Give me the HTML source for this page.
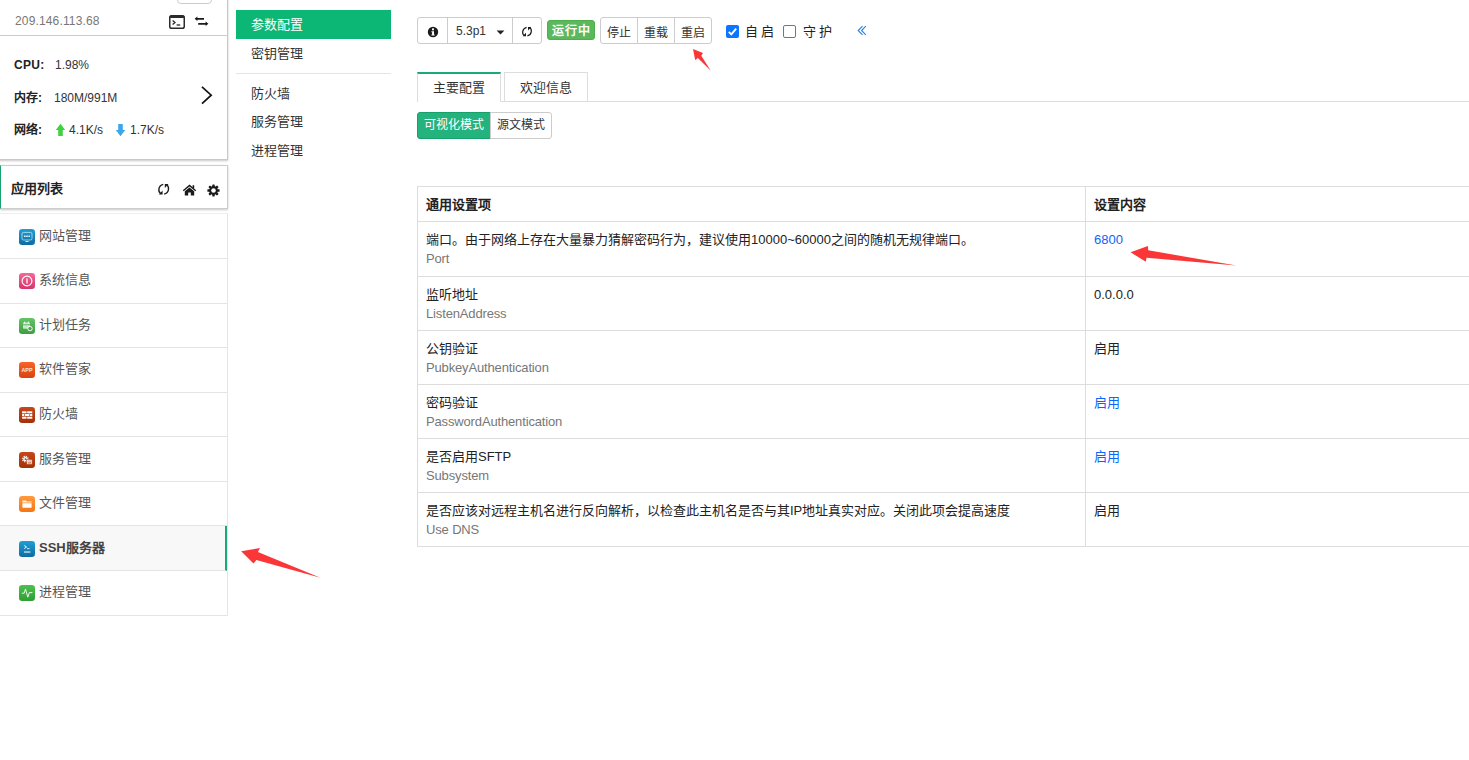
<!DOCTYPE html>
<html lang="zh-CN">
<head>
<meta charset="utf-8">
<title>SSH</title>
<style>
*{box-sizing:border-box;margin:0;padding:0}
html,body{width:1469px;height:760px;overflow:hidden;background:#fff}
body{font-family:"Liberation Sans",sans-serif;font-size:13px;color:#333;position:relative}
.abs{position:absolute}
.t{position:absolute;white-space:nowrap;line-height:1}
/* sidebar */
#side{position:absolute;left:0;top:0;width:228px;height:760px}
#card1{position:absolute;left:-2px;top:-10px;width:230px;height:170px;background:#fff;border-right:1px solid #c8c8c8;border-bottom:1px solid #c8c8c8;box-shadow:0 1px 2px rgba(0,0,0,.22)}
#hr1{position:absolute;left:0;top:35px;width:227px;height:1px;background:#ccc}
#topbox{position:absolute;left:177px;top:-6px;width:35px;height:10px;border:1px solid #ccc;border-radius:4px;background:#fff}
#card2{position:absolute;left:0;top:165px;width:228px;height:44px;background:#fff;border:1px solid #ccc;border-left:1px solid #17a36d;box-shadow:0 1px 2px rgba(0,0,0,.22)}
#list{position:absolute;left:0;top:213px;width:228px;height:403px;border-right:1px solid #e5e5e5;border-top:1px solid #eee}
.li{position:absolute;left:0;width:227px;border-bottom:1px solid #e4e4e4;background:#fff}
.li .ic{position:absolute;left:19px;top:16px;width:16px;height:16px}
.li .tx{position:absolute;left:39px;top:15px;font-size:13px;line-height:14px;color:#555;white-space:nowrap}
.li.on{background:#f8f8f8;border-right:2px solid #19a974}
.li.on .tx{font-weight:bold;color:#444}
/* submenu */
#sub{position:absolute;left:236px;top:10px;width:155px}
#sub .on{position:absolute;left:0;top:0;width:155px;height:29px;background:#0cb775}
.sm{position:absolute;left:15px;font-size:13px;line-height:14px;color:#333;white-space:nowrap}
/* main */
.btn{position:absolute;height:29px;border:1px solid #ccc;background:#fff;font-size:12px;color:#333}

#g1{position:absolute;left:417px;top:17px;width:125px;height:27px;border:1px solid #ccc;border-radius:3px;background:#fff}
#g1 i{position:absolute;top:0;width:1px;height:25px;background:#ccc}
#badge{position:absolute;left:547px;top:20px;width:48px;height:20px;background:#5cb85c;border:1px solid #4cae4c;border-radius:3px;color:#fff;font-size:12px;font-weight:bold;line-height:20px;text-align:center}
#g2{position:absolute;left:600px;top:17px;width:112px;height:27px;border:1px solid #ccc;border-radius:3px;background:#fff}
#g2 i{position:absolute;top:0;width:1px;height:25px;background:#ccc}
#g2>span{position:absolute;top:0;width:37px;height:25px;line-height:31px;margin-left:-1px;font-size:12px;text-align:center;color:#333}
.cb{position:absolute;top:25px;width:13px;height:13px;border-radius:2px}
#tab1{position:absolute;left:417px;top:72px;width:84px;height:30px;border-top:2px solid #19aa75;border-left:1px solid #ddd;border-right:1px solid #ddd;background:#fff}
#tab2{position:absolute;left:504px;top:72px;width:84px;height:29px;border:1px solid #ddd;border-bottom:none;background:#fff}
#tabline{position:absolute;left:501px;top:101px;width:968px;height:1px;background:#ddd}
.tabtx{position:absolute;top:81px;font-size:13px;line-height:14px;color:#333;white-space:nowrap}
#m1{position:absolute;left:417px;top:112px;width:74px;height:27px;background:#24b27d;border:1px solid #16a06c;border-radius:3px 0 0 3px;color:#fff;font-size:12px;font-weight:normal;line-height:25px;text-align:center;white-space:nowrap}
#m2{position:absolute;left:490px;top:112px;width:62px;height:27px;background:#fff;border:1px solid #ccc;border-radius:0 3px 3px 0;color:#333;font-size:12px;line-height:25px;text-align:center;white-space:nowrap}
#tbl{position:absolute;left:417px;top:186px;width:1300px;border-collapse:collapse;font-size:13px;line-height:18.5px;color:#222}
#tbl td,#tbl th{border:1px solid #ddd;padding:9px 8px 7px 8px;text-align:left;vertical-align:top;white-space:nowrap}
#tbl th{font-weight:bold;color:#222;padding-top:9px;padding-bottom:6.5px}
#tbl tr.r1 td{padding-bottom:8px}
#tbl .s{color:#777;letter-spacing:-0.15px}
#tbl .a{color:#0a66fa}
.j{display:inline-block;white-space:nowrap;text-align:justify;text-align-last:justify}
</style>
</head>
<body>
<div id="side">
  <div id="card1"></div>
  <div id="topbox"></div>
  <div id="hr1"></div>
  <div class="t" style="left:15px;top:15px;font-size:12px;color:#777;letter-spacing:0.15px">209.146.113.68</div>
  <div class="t" style="left:14px;top:59px;font-size:12px;font-weight:bold;color:#222;letter-spacing:0.3px">CPU:</div>
  <div class="t" style="left:55px;top:59px;font-size:12px;color:#333">1.98%</div>
  <div class="t j" style="width:28.0px;left:14px;top:92px;font-size:12px;font-weight:bold;color:#222">内存:</div>
  <div class="t" style="left:54px;top:92px;font-size:12px;color:#333">180M/991M</div>
  <div class="t j" style="width:28.0px;left:14px;top:124px;font-size:12px;font-weight:bold;color:#222">网络:</div>
  <div class="t" style="left:69px;top:124px;font-size:12px;color:#333">4.1K/s</div>
  <div class="t" style="left:130px;top:124px;font-size:12px;color:#333">1.7K/s</div>

  <svg class="abs" style="left:168px;top:14px" width="18" height="16" viewBox="0 0 18 16">
    <rect x="1.75" y="1.75" width="14.5" height="12.5" rx="1.8" fill="#fff" stroke="#2b2b2b" stroke-width="1.5"/>
    <rect x="1.75" y="1.5" width="14.5" height="2.6" rx="1" fill="#2b2b2b"/>
    <path d="M4.6 6.6 L7 8.6 L4.6 10.6" fill="none" stroke="#2b2b2b" stroke-width="1.3"/>
    <path d="M8.6 11 H12.2" stroke="#2b2b2b" stroke-width="1.3"/>
  </svg>
  <svg class="abs" style="left:194px;top:15px" width="16" height="13" viewBox="0 0 16 13">
    <path d="M0.6 3.8 L3.4 1.6 V3 H10 V4.7 H3.4 V6 Z" fill="#1a1a1a"/>
    <path d="M14.4 8.8 L11.6 6.6 V8 H4.2 V9.7 H11.6 V11 Z" fill="#1a1a1a"/>
  </svg>
  <svg class="abs" style="left:199px;top:84px" width="16" height="22" viewBox="0 0 16 22">
    <path d="M3 2.8 L12.2 11.2 L3 19.6" fill="none" stroke="#111" stroke-width="1.7"/>
  </svg>
  <svg class="abs" style="left:55px;top:123px" width="11" height="14" viewBox="0 0 11 14">
    <path d="M5.5 0.8 L10.2 7 H7.8 V13 H3.2 V7 H0.8 Z" fill="#3fd23f"/>
  </svg>
  <svg class="abs" style="left:115px;top:123px" width="11" height="14" viewBox="0 0 11 14">
    <path d="M5.5 13.2 L10.2 7 H7.8 V1 H3.2 V7 H0.8 Z" fill="#3ea7ea"/>
  </svg>
  <div id="card2"></div>
  <div class="t j" style="width:52.0px;left:11px;top:182px;font-size:13px;font-weight:bold;color:#222">应用列表</div>

  <svg class="abs" style="left:156.5px;top:183.3px" width="13.4" height="12.5" viewBox="0 0 12 11.2">
    <path d="M5.6 1.3 C0.8 2.6 0.8 8 3.4 9.6" fill="none" stroke="#1a1a1a" stroke-width="1.2"/>
      <path d="M6.4 9.9 C11.2 8.6 11.2 3.2 8.6 1.6" fill="none" stroke="#1a1a1a" stroke-width="1.2"/>
      <path d="M1.7 10.2 H5 V6.8 Z" fill="#1a1a1a"/>
      <path d="M10.3 1 H7 V4.4 Z" fill="#1a1a1a"/>
  </svg>
  <svg class="abs" style="left:182px;top:184px" width="15" height="12" viewBox="0 0 15 12">
    <path d="M7.5 0.6 L14.2 6.2 L13.3 7.2 L7.5 2.4 L1.7 7.2 L0.8 6.2 Z" fill="#1a1a1a"/>
    <path d="M7.5 3.4 L12.2 7.3 V11.4 H8.8 V8.4 H6.2 V11.4 H2.8 V7.3 Z" fill="#1a1a1a"/>
    <rect x="10.6" y="1.2" width="1.6" height="3" fill="#1a1a1a"/>
  </svg>
  <svg class="abs" style="left:207px;top:184px" width="13" height="13" viewBox="0 0 13 13">
    <g fill="#1a1a1a">
      <circle cx="6.5" cy="6.5" r="4.4"/>
      <rect x="5.3" y="0.4" width="2.4" height="12.2" rx="0.5"/>
      <rect x="5.3" y="0.4" width="2.4" height="12.2" rx="0.5" transform="rotate(45 6.5 6.5)"/>
      <rect x="5.3" y="0.4" width="2.4" height="12.2" rx="0.5" transform="rotate(90 6.5 6.5)"/>
      <rect x="5.3" y="0.4" width="2.4" height="12.2" rx="0.5" transform="rotate(135 6.5 6.5)"/>
    </g>
    <circle cx="6.5" cy="6.5" r="2.3" fill="#fff"/>
  </svg>
  <div id="list">
    <div class="li" style="top:0px;height:45px"><svg class="ic" style="top:15px" width="16" height="16" viewBox="0 0 16 16"><defs><linearGradient id="g1" x1="0" y1="0" x2="0" y2="1"><stop offset="0" stop-color="#1e9fd6"/><stop offset="1" stop-color="#0f6b9f"/></linearGradient></defs><rect width="16" height="16" rx="3.2" fill="url(#g1)"/><rect x="3" y="3.4" width="10" height="7.6" rx="1.6" fill="none" stroke="#fff" stroke-width="1" opacity=".6"/><rect x="5" y="6.6" width="1.6" height="1.3" fill="#fff"/><rect x="7.2" y="6.6" width="1.6" height="1.3" fill="#fff"/><rect x="9.4" y="6.6" width="1.6" height="1.3" fill="#fff"/><rect x="6.4" y="12" width="3.2" height="0.9" fill="#fff" opacity=".85"/></svg><span class="tx j" style="width:52.0px;top:15px">网站管理</span></div>
    <div class="li" style="top:45px;height:45px"><svg class="ic" style="top:14px" width="16" height="16" viewBox="0 0 16 16"><defs><linearGradient id="g2" x1="0" y1="0" x2="0" y2="1"><stop offset="0" stop-color="#f4689a"/><stop offset="1" stop-color="#d5346a"/></linearGradient></defs><rect width="16" height="16" rx="3.2" fill="url(#g2)"/><circle cx="8" cy="8" r="4.9" fill="none" stroke="#fff" stroke-width="1.1"/><rect x="7.4" y="5.4" width="1.2" height="5.2" fill="#fff"/></svg><span class="tx j" style="width:52.0px;top:14px">系统信息</span></div>
    <div class="li" style="top:90px;height:44px"><svg class="ic" style="top:14px" width="16" height="16" viewBox="0 0 16 16"><defs><linearGradient id="g3" x1="0" y1="0" x2="0" y2="1"><stop offset="0" stop-color="#63c466"/><stop offset="1" stop-color="#3f9e43"/></linearGradient></defs><rect width="16" height="16" rx="3.2" fill="url(#g3)"/><rect x="4" y="4.6" width="7" height="6.2" rx="0.8" fill="#fff" opacity=".7"/><rect x="4" y="6.4" width="7" height="0.8" fill="#4aa94e"/><rect x="5.2" y="3.6" width="1" height="1.8" fill="#fff"/><rect x="8.8" y="3.6" width="1" height="1.8" fill="#fff"/><circle cx="11" cy="10.6" r="2.2" fill="#4aa94e" stroke="#fff" stroke-width="0.9"/></svg><span class="tx j" style="width:52.0px;top:14px">计划任务</span></div>
    <div class="li" style="top:134px;height:45px"><svg class="ic" style="top:14px" width="16" height="16" viewBox="0 0 16 16"><defs><linearGradient id="g4" x1="0" y1="0" x2="0" y2="1"><stop offset="0" stop-color="#f7632b"/><stop offset="1" stop-color="#d9430f"/></linearGradient></defs><rect width="16" height="16" rx="3.2" fill="url(#g4)"/><text x="8" y="10.2" font-family="Liberation Sans, sans-serif" font-size="5.6" font-weight="bold" fill="#fff" opacity=".85" text-anchor="middle" textLength="11" lengthAdjust="spacingAndGlyphs">APP</text></svg><span class="tx j" style="width:52.0px;top:14px">软件管家</span></div>
    <div class="li" style="top:179px;height:44px"><svg class="ic" style="top:14px" width="16" height="16" viewBox="0 0 16 16"><defs><linearGradient id="g5" x1="0" y1="0" x2="0" y2="1"><stop offset="0" stop-color="#c8461a"/><stop offset="1" stop-color="#a3300a"/></linearGradient></defs><rect width="16" height="16" rx="3.2" fill="url(#g5)"/><g fill="#fff"><rect x="3.1" y="4.3" width="4.4" height="2"/><rect x="8.2" y="4.3" width="5.1" height="2"/><rect x="3.1" y="7" width="2.2" height="2"/><rect x="6" y="7" width="4.4" height="2"/><rect x="11.1" y="7" width="2.2" height="2"/><rect x="3.1" y="9.7" width="4.4" height="2"/><rect x="8.2" y="9.7" width="5.1" height="2"/></g></svg><span class="tx j" style="width:39.0px;top:14px">防火墙</span></div>
    <div class="li" style="top:223px;height:45px"><svg class="ic" style="top:15px" width="16" height="16" viewBox="0 0 16 16"><defs><linearGradient id="g6" x1="0" y1="0" x2="0" y2="1"><stop offset="0" stop-color="#c8461a"/><stop offset="1" stop-color="#a3300a"/></linearGradient></defs><rect width="16" height="16" rx="3.2" fill="url(#g6)"/><circle cx="6.4" cy="7.1" r="2.7" fill="none" stroke="#fff" stroke-width="1.3" stroke-dasharray="1.2 0.92"/><circle cx="6.4" cy="7.1" r="2.2" fill="#fff"/><circle cx="6.4" cy="7.1" r="0.9" fill="#b53a10"/><rect x="7.7" y="7.3" width="5.4" height="5.2" fill="#fff" stroke="#b53a10" stroke-width="0.7" opacity=".95"/><rect x="8.8" y="8.7" width="3.2" height="0.7" fill="#b53a10" opacity=".7"/><rect x="8.8" y="10" width="3.2" height="0.7" fill="#b53a10" opacity=".7"/><rect x="8.8" y="11.2" width="3.2" height="0.6" fill="#b53a10" opacity=".7"/></svg><span class="tx j" style="width:52.0px;top:15px">服务管理</span></div>
    <div class="li" style="top:268px;height:44px"><svg class="ic" style="top:14px" width="16" height="16" viewBox="0 0 16 16"><defs><linearGradient id="g7" x1="0" y1="0" x2="0" y2="1"><stop offset="0" stop-color="#ff9a3c"/><stop offset="1" stop-color="#f57614"/></linearGradient></defs><rect width="16" height="16" rx="3.2" fill="url(#g7)"/><path d="M3.4 4.4 H7 L8 5.4 H12.6 V6.6 H3.4 Z" fill="#fff" opacity=".9"/><rect x="3.4" y="7.2" width="9.2" height="4.6" rx="0.5" fill="#fff"/></svg><span class="tx j" style="width:52.0px;top:14px">文件管理</span></div>
    <div class="li on" style="top:312px;height:45px"><svg class="ic" style="top:15px" width="16" height="16" viewBox="0 0 16 16"><defs><linearGradient id="g8" x1="0" y1="0" x2="0" y2="1"><stop offset="0" stop-color="#1e9fd6"/><stop offset="1" stop-color="#0f6b9f"/></linearGradient></defs><rect width="16" height="16" rx="3.2" fill="url(#g8)"/><path d="M5.2 4.5 L7.6 6 L5.2 7.5" fill="none" stroke="#fff" stroke-width="0.9"/><rect x="8" y="7.3" width="2.6" height="0.8" fill="#fff"/><rect x="5" y="10.2" width="6.4" height="1.7" fill="#fff" opacity=".6"/></svg><span class="tx j" style="width:65.74px;top:15px">SSH服务器</span></div>
    <div class="li" style="top:357px;height:45px"><svg class="ic" style="top:14px" width="16" height="16" viewBox="0 0 16 16"><defs><linearGradient id="g9" x1="0" y1="0" x2="0" y2="1"><stop offset="0" stop-color="#4cc24c"/><stop offset="1" stop-color="#2f9e34"/></linearGradient></defs><rect width="16" height="16" rx="3.2" fill="url(#g9)"/><path d="M2.8 8.2 H5.2 L6.5 4 L8.8 12.2 L10.3 7.6 H13.4" fill="none" stroke="#fff" stroke-width="0.9" stroke-linejoin="round"/></svg><span class="tx j" style="width:52.0px;top:14px">进程管理</span></div>
  </div>
</div>
<div id="sub">
  <div class="on"></div>
  <div class="sm j" style="width:52.0px;top:8px;color:#fff">参数配置</div>
  <div class="sm j" style="width:52.0px;top:37px">密钥管理</div>
  <div class="abs" style="left:0;top:63px;width:155px;height:1px;background:#e5e5e5"></div>
  <div class="sm j" style="width:39.0px;top:77px">防火墙</div>
  <div class="sm j" style="width:52.0px;top:105px">服务管理</div>
  <div class="sm j" style="width:52.0px;top:134px">进程管理</div>
</div>
<div id="main">
  <div id="g1">
    <i style="left:29px"></i><i style="left:94px"></i>
    <svg class="abs" style="left:9px;top:8px" width="12" height="12" viewBox="0 0 12 12">
      <circle cx="6" cy="6" r="5.2" fill="#1a1a1a"/>
      <rect x="5" y="2.4" width="2" height="1.9" fill="#fff"/>
      <path d="M4.4 5.2 H7 V8.4 H7.7 V9.5 H4.4 V8.4 H5.1 V6.3 H4.4 Z" fill="#fff"/>
    </svg>
    <div class="t" style="left:38px;top:7px;font-size:12px;color:#333">5.3p1</div>
    <svg class="abs" style="left:78px;top:12px" width="9" height="5" viewBox="0 0 9 5"><path d="M0.6 0.4 H8.4 L4.5 4.4 Z" fill="#222"/></svg>
    <svg class="abs" style="left:103.2px;top:8px" width="12" height="11.2" viewBox="0 0 12 11.2">
      <path d="M5.6 1.3 C0.8 2.6 0.8 8 3.4 9.6" fill="none" stroke="#1a1a1a" stroke-width="1.2"/>
      <path d="M6.4 9.9 C11.2 8.6 11.2 3.2 8.6 1.6" fill="none" stroke="#1a1a1a" stroke-width="1.2"/>
      <path d="M1.7 10.2 H5 V6.8 Z" fill="#1a1a1a"/>
      <path d="M10.3 1 H7 V4.4 Z" fill="#1a1a1a"/>
    </svg>
  </div>
  <div id="badge"><span class="j" style="width:39px;letter-spacing:1px;margin-left:1px">运行中</span></div>
  <div id="g2">
    <span style="left:0"><span class="j" style="width:24.0px">停止</span></span><span style="left:37px"><span class="j" style="width:24.0px">重载</span></span><span style="left:74px"><span class="j" style="width:24.0px">重启</span></span>
    <i style="left:36px"></i><i style="left:73px"></i>
  </div>
  <div class="cb" style="left:726px;background:#0a75ff">
    <svg width="13" height="13" viewBox="0 0 13 13" style="display:block"><path d="M2.8 6.8 L5.3 9.3 L10.2 3.6" fill="none" stroke="#fff" stroke-width="1.9"/></svg>
  </div>
  <div class="t j" style="width:31px;left:745px;top:25px;font-size:13px;letter-spacing:2.5px;color:#222">自启</div>
  <div class="cb" style="left:783px;background:#fff;border:1px solid #767676"></div>
  <div class="t j" style="width:31px;left:803px;top:25px;font-size:13px;letter-spacing:2.5px;color:#222">守护</div>
  <svg class="abs" style="left:857px;top:25px" width="11" height="11" viewBox="0 0 11 11">
    <path d="M5.5 1.2 L1.2 5.5 L5.5 9.8 M8.8 1.2 L4.6 5.5 L8.8 9.8" fill="none" stroke="#3382dc" stroke-width="1.15"/>
  </svg>
  <div id="tabline"></div>
  <div id="tab1"></div>
  <div id="tab2"></div>
  <div class="tabtx j" style="width:52.0px;left:433px">主要配置</div>
  <div class="tabtx j" style="width:52.0px;left:520px">欢迎信息</div>
  <div id="m1"><span class="j" style="width:60.0px">可视化模式</span></div>
  <div id="m2"><span class="j" style="width:48.0px">源文模式</span></div>
  <table id="tbl">
    <tr><th style="width:668px"><span class="j" style="width:65.0px">通用设置项</span></th><th><span class="j" style="width:52.0px">设置内容</span></th></tr>
    <tr class="r1"><td><span class="j" style="width:547.91px">端口。由于网络上存在大量暴力猜解密码行为，建议使用10000~60000之间的随机无规律端口。</span><br><span class="s">Port</span></td><td><span class="a">6800</span></td></tr>
    <tr><td><span class="j" style="width:52.0px">监听地址</span><br><span class="s">ListenAddress</span></td><td>0.0.0.0</td></tr>
    <tr><td><span class="j" style="width:52.0px">公钥验证</span><br><span class="s">PubkeyAuthentication</span></td><td><span class="j" style="width:26.0px">启用</span></td></tr>
    <tr><td><span class="j" style="width:52.0px">密码验证</span><br><span class="s">PasswordAuthentication</span></td><td><span class="a j" style="width:26.0px">启用</span></td></tr>
    <tr><td><span class="j" style="width:85.24px">是否启用SFTP</span><br><span class="s">Subsystem</span></td><td><span class="a j" style="width:26.0px">启用</span></td></tr>
    <tr><td><span class="j" style="width:584.3px">是否应该对远程主机名进行反向解析，以检查此主机名是否与其IP地址真实对应。关闭此项会提高速度</span><br><span class="s">Use DNS</span></td><td><span class="j" style="width:26.0px">启用</span></td></tr>
  </table>
  <svg class="abs" style="left:0;top:0;pointer-events:none" width="1469" height="760" viewBox="0 0 1469 760">
    <g fill="#fb3636">
      <path d="M1130.5 252.2 L1148 245.9 L1148.2 250.3 L1236.4 265.5 L1146.5 257.7 L1145.8 261.8 Z"/>
      <path d="M693 48.9 L703 52.9 L701.3 55.8 L710.8 70.8 L697.9 57.9 L695.2 60 Z"/>
      <path d="M241.2 551.3 L260 548 L257.9 552 L320.4 577.7 L256.4 560 L253.5 563.6 Z"/>
    </g>
  </svg>
</div>
</body>
</html>
